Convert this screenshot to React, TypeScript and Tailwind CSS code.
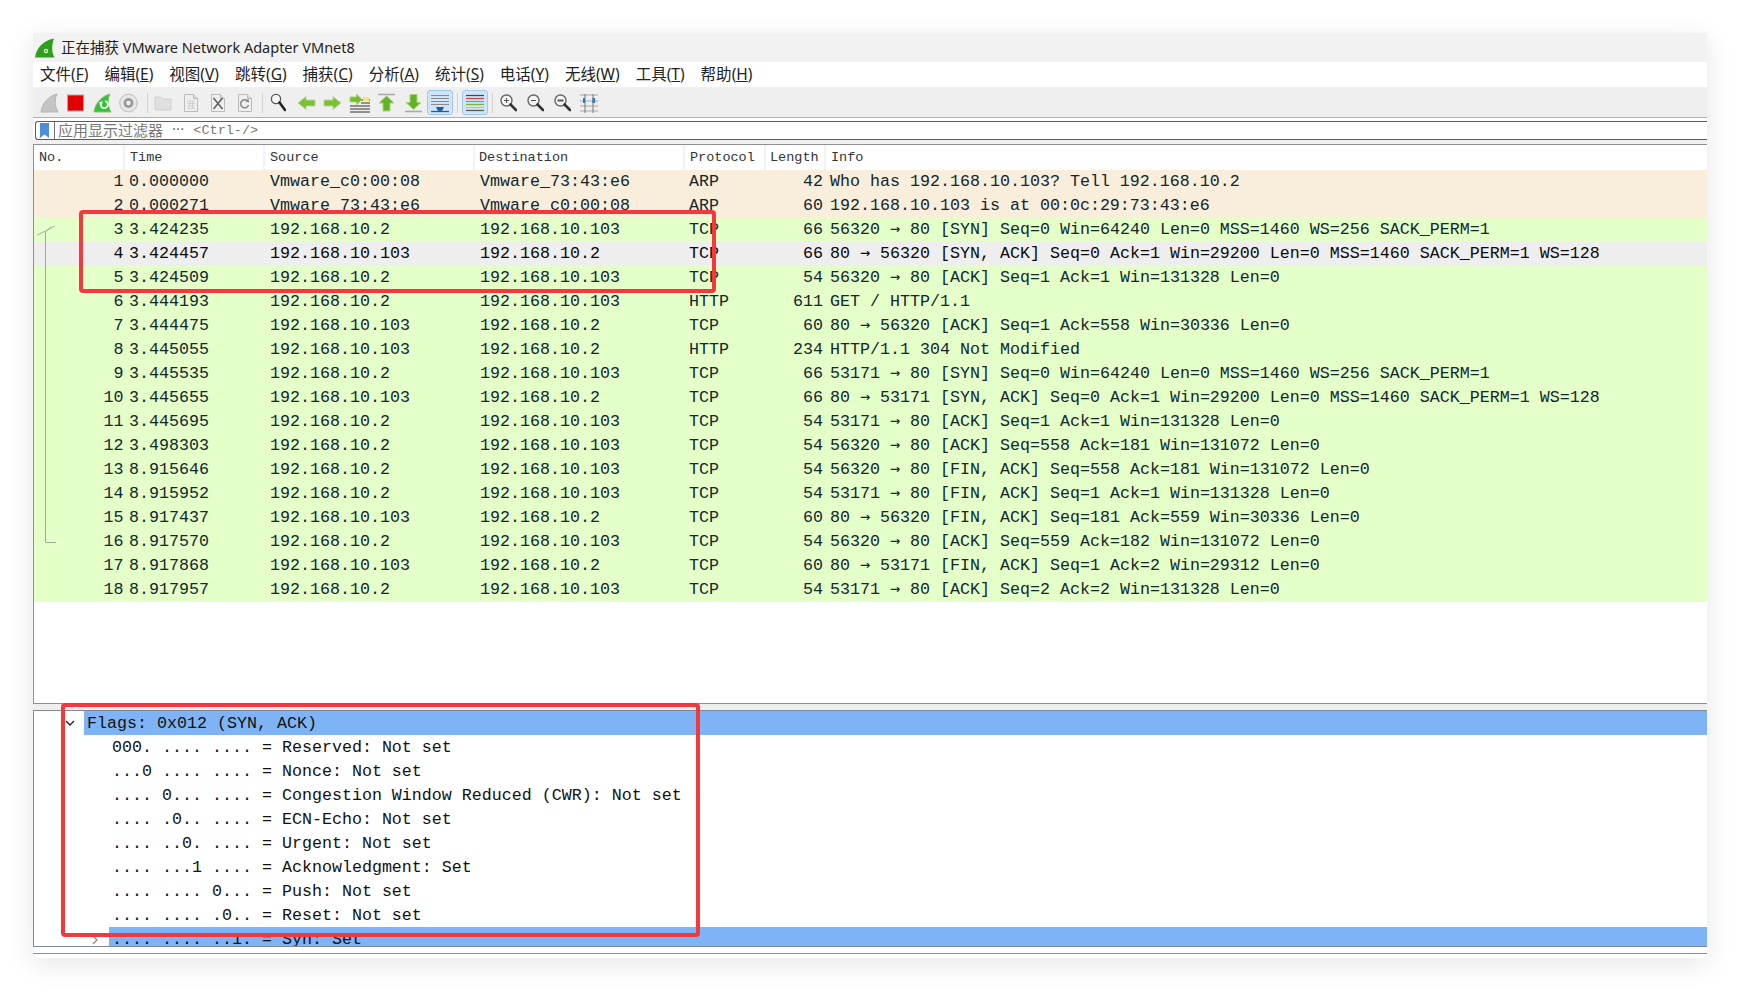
import React from "react";

const rows: [number, string, string, string, string, number, string, string][] = [
  [1, "0.000000", "Vmware_c0:00:08", "Vmware_73:43:e6", "ARP", 42, "Who has 192.168.10.103? Tell 192.168.10.2", "arp"],
  [2, "0.000271", "Vmware_73:43:e6", "Vmware_c0:00:08", "ARP", 60, "192.168.10.103 is at 00:0c:29:73:43:e6", "arp"],
  [3, "3.424235", "192.168.10.2", "192.168.10.103", "TCP", 66, "56320 → 80 [SYN] Seq=0 Win=64240 Len=0 MSS=1460 WS=256 SACK_PERM=1", "tcp"],
  [4, "3.424457", "192.168.10.103", "192.168.10.2", "TCP", 66, "80 → 56320 [SYN, ACK] Seq=0 Ack=1 Win=29200 Len=0 MSS=1460 SACK_PERM=1 WS=128", "sel"],
  [5, "3.424509", "192.168.10.2", "192.168.10.103", "TCP", 54, "56320 → 80 [ACK] Seq=1 Ack=1 Win=131328 Len=0", "tcp"],
  [6, "3.444193", "192.168.10.2", "192.168.10.103", "HTTP", 611, "GET / HTTP/1.1", "tcp"],
  [7, "3.444475", "192.168.10.103", "192.168.10.2", "TCP", 60, "80 → 56320 [ACK] Seq=1 Ack=558 Win=30336 Len=0", "tcp"],
  [8, "3.445055", "192.168.10.103", "192.168.10.2", "HTTP", 234, "HTTP/1.1 304 Not Modified", "tcp"],
  [9, "3.445535", "192.168.10.2", "192.168.10.103", "TCP", 66, "53171 → 80 [SYN] Seq=0 Win=64240 Len=0 MSS=1460 WS=256 SACK_PERM=1", "tcp"],
  [10, "3.445655", "192.168.10.103", "192.168.10.2", "TCP", 66, "80 → 53171 [SYN, ACK] Seq=0 Ack=1 Win=29200 Len=0 MSS=1460 SACK_PERM=1 WS=128", "tcp"],
  [11, "3.445695", "192.168.10.2", "192.168.10.103", "TCP", 54, "53171 → 80 [ACK] Seq=1 Ack=1 Win=131328 Len=0", "tcp"],
  [12, "3.498303", "192.168.10.2", "192.168.10.103", "TCP", 54, "56320 → 80 [ACK] Seq=558 Ack=181 Win=131072 Len=0", "tcp"],
  [13, "8.915646", "192.168.10.2", "192.168.10.103", "TCP", 54, "56320 → 80 [FIN, ACK] Seq=558 Ack=181 Win=131072 Len=0", "tcp"],
  [14, "8.915952", "192.168.10.2", "192.168.10.103", "TCP", 54, "53171 → 80 [FIN, ACK] Seq=1 Ack=1 Win=131328 Len=0", "tcp"],
  [15, "8.917437", "192.168.10.103", "192.168.10.2", "TCP", 60, "80 → 56320 [FIN, ACK] Seq=181 Ack=559 Win=30336 Len=0", "tcp"],
  [16, "8.917570", "192.168.10.2", "192.168.10.103", "TCP", 54, "56320 → 80 [ACK] Seq=559 Ack=182 Win=131072 Len=0", "tcp"],
  [17, "8.917868", "192.168.10.103", "192.168.10.2", "TCP", 60, "80 → 53171 [FIN, ACK] Seq=1 Ack=2 Win=29312 Len=0", "tcp"],
  [18, "8.917957", "192.168.10.2", "192.168.10.103", "TCP", 54, "53171 → 80 [ACK] Seq=2 Ack=2 Win=131328 Len=0", "tcp"],
];

const details = [
  "000. .... .... = Reserved: Not set",
  "...0 .... .... = Nonce: Not set",
  ".... 0... .... = Congestion Window Reduced (CWR): Not set",
  ".... .0.. .... = ECN-Echo: Not set",
  ".... ..0. .... = Urgent: Not set",
  ".... ...1 .... = Acknowledgment: Set",
  ".... .... 0... = Push: Not set",
  ".... .... .0.. = Reset: Not set",
];

const menus = [
  ["文件", "F"], ["编辑", "E"], ["视图", "V"], ["跳转", "G"], ["捕获", "C"], ["分析", "A"],
  ["统计", "S"], ["电话", "Y"], ["无线", "W"], ["工具", "T"], ["帮助", "H"],
];

const Ico = ({ w, ml, children }: { w: number; ml: string; children: React.ReactNode }) => (
  <svg width={w} height={20} viewBox={`0 0 ${w} 20`} className={`shrink-0 ${ml}`}>{children}</svg>
);

const Glass = ({ mark }: { mark?: string }) => (
  <>
    <circle cx="7.5" cy="7.5" r="5.5" fill="#f6f6f6" stroke="#666" strokeWidth="1.4" />
    <path d="M11.5 11.5 L17 17" stroke="#333" strokeWidth="2.6" strokeLinecap="round" />
    {mark === "plus" && <path d="M5 7.5h5M7.5 5v5" stroke="#555" strokeWidth="1.1" />}
    {mark === "minus" && <path d="M5 7.5h5" stroke="#555" strokeWidth="1.1" />}
    {mark === "reset" && <path d="M4.5 7.5h6" stroke="#555" strokeWidth="2" />}
  </>
);

const Doc = ({ children }: { children?: React.ReactNode }) => (
  <>
    <path d="M2.5 1.5h9l4 4v13h-13z" fill="#efefef" stroke="#bbb" />
    <path d="M11.5 1.5v4h4" fill="#ddd" stroke="#bbb" />
    {children}
  </>
);

const Toolbar = () => (
  <div className="flex items-center h-[29px] bg-[#efefef] border-b border-[#b0b0b0] box-content">
    <Ico w={19} ml="ml-[7px]">
      <path d="M1 19 C2 10 9 3 17 1 C14 7 15 14 18 19 Z" fill="#c4c4c4" stroke="#b4b4b4" />
    </Ico>
    <Ico w={17} ml="ml-[8px]">
      <rect x="0.5" y="2" width="16" height="16" fill="#e30000" stroke="#a8a8a8" />
    </Ico>
    <Ico w={19} ml="ml-[9px]">
      <path d="M1 19 C2 10 9 3 17 1 C14 7 15 14 18 19 Z" fill="#33c23a" stroke="#8fbf70" />
      <path d="M12 8 A3.6 3.6 0 1 1 8 10" fill="none" stroke="#fff" strokeWidth="1.7" />
      <path d="M5.5 9.5 L9.5 8 L9 12 Z" fill="#fff" />
    </Ico>
    <Ico w={19} ml="ml-[7px]">
      <circle cx="9.5" cy="10" r="8.8" fill="#e8e8e8" stroke="#bdbdbd" />
      <circle cx="9.5" cy="10" r="5" fill="#9a9a9a" />
      <circle cx="9.5" cy="10" r="2.2" fill="#efefef" />
    </Ico>
    <div className="w-px h-[20px] bg-[#d4d4d4] ml-[9px]" />
    <Ico w={18} ml="ml-[6px]">
      <path d="M1 4h6l2 2h8v11H1z" fill="#dfdfdf" stroke="#d0d0d0" />
    </Ico>
    <Ico w={17} ml="ml-[10px]">
      <Doc><path d="M5 8h8M5 10.5h8M5 13h8M5 15.5h8M7.5 8v8M10.5 8v8" stroke="#ccc" strokeWidth="0.8" /></Doc>
    </Ico>
    <Ico w={18} ml="ml-[10px]">
      <Doc><path d="M4.5 5 L13.5 16 M13.5 5 L4.5 16" stroke="#666" strokeWidth="1.7" /></Doc>
    </Ico>
    <Ico w={17} ml="ml-[9px]">
      <Doc><path d="M11.5 8 A4 4 0 1 0 12.5 12" fill="none" stroke="#888" strokeWidth="1.5" /><path d="M9.5 8.5 L13 9.5 L12.5 5.5 Z" fill="#888" /></Doc>
    </Ico>
    <div className="w-px h-[20px] bg-[#d4d4d4] ml-[9px]" />
    <Ico w={16} ml="ml-[7px]">
      <circle cx="6" cy="6" r="4.6" fill="#fafafa" stroke="#555" strokeWidth="1.3" />
      <path d="M9.5 9.5 L15 17" stroke="#222" strokeWidth="2.6" strokeLinecap="round" />
    </Ico>
    <Ico w={19} ml="ml-[11px]">
      <path d="M1 10 L9 3.500 V7 H18 V13 H9 V16.500 Z" fill="#7cc035" stroke="#b4d98c" />
    </Ico>
    <Ico w={19} ml="ml-[7px]">
      <path d="M18 10 L10 3.500 V7 H1 V13 H10 V16.500 Z" fill="#7cc035" stroke="#b4d98c" />
    </Ico>
    <Ico w={21} ml="ml-[7px]">
      <path d="M4 7h17M12 10h9M1 13h20M1 16h20M1 19h20" stroke="#333" strokeWidth="1.1" />
      <rect x="14" y="4" width="6" height="4" fill="#f3e27a" />
      <path d="M13 6.5 L7.5 1 V4 H1 V9 H7.5 V12 Z" fill="#76bb2c" stroke="#a9d47a" />
    </Ico>
    <Ico w={19} ml="ml-[7px]">
      <path d="M1 1.5h17" stroke="#aaa" strokeWidth="1.6" />
      <path d="M9.5 3 L17 10 H13 V18 H6 V10 H2 Z" fill="#62b325" stroke="#a9d47a" />
    </Ico>
    <Ico w={19} ml="ml-[8px]">
      <path d="M1 18.5h17" stroke="#aaa" strokeWidth="1.6" />
      <path d="M9.5 16.5 L17 9.5 H13 V1.5 H6 V9.5 H2 Z" fill="#62b325" stroke="#a9d47a" />
    </Ico>
    <div className="flex items-center justify-center w-[26px] h-[25px] ml-[4px] bg-[#cfe4f9] border border-[#9fc8ec] rounded-[3px]">
      <svg width="20" height="20" viewBox="0 0 20 20">
        <path d="M1 2.5h18M1 5.5h18M1 8.5h18M1 11.5h18" stroke="#8a8a8a" strokeWidth="1" />
        <path d="M1 18.5h18" stroke="#1f5f99" strokeWidth="1.3" />
        <path d="M6 14h8l-2 4h-4z" fill="#1f5f99" />
      </svg>
    </div>
    <div className="w-px h-[20px] bg-[#d4d4d4] ml-[4px]" />
    <div className="flex items-center justify-center w-[26px] h-[25px] ml-[4px] bg-[#cfe4f9] border border-[#9fc8ec] rounded-[3px]">
      <svg width="20" height="20" viewBox="0 0 20 20">
        <path d="M1 2.5h18" stroke="#444" strokeWidth="1.2" />
        <path d="M1 5.5h18" stroke="#d9433f" strokeWidth="1.2" />
        <path d="M1 8.5h18" stroke="#5aa0d8" strokeWidth="1.2" />
        <path d="M1 11.5h18" stroke="#72b53a" strokeWidth="1.2" />
        <path d="M1 14.5h18" stroke="#e6c72e" strokeWidth="1.2" />
        <path d="M1 17.5h18" stroke="#555" strokeWidth="1.2" />
      </svg>
    </div>
    <div className="w-px h-[20px] bg-[#d4d4d4] ml-[4px]" />
    <Ico w={18} ml="ml-[6px]"><Glass mark="plus" /></Ico>
    <Ico w={18} ml="ml-[9px]"><Glass mark="minus" /></Ico>
    <Ico w={18} ml="ml-[9px]"><Glass mark="reset" /></Ico>
    <Ico w={18} ml="ml-[9px]">
      <path d="M0 2h18M0 8h18M0 13h18M0 18h18" stroke="#a8a8a8" strokeWidth="1" />
      <path d="M5 1v19M13 1v19" stroke="#777" strokeWidth="1" />
      <path d="M3 5h2v5H3zM12.5 5h2.500v5h-2.500z" fill="#2e78c4" />
    </Ico>
  </div>
);

const rowBg: Record<string, string> = {
  arp: "bg-[#f8eedb] text-[#12272e]",
  tcp: "bg-[#e4ffc7] text-[#12272e]",
  sel: "bg-[#eeeeee] text-[#0a0a0a]",
};

const Info = ({ text }: { text: string }) => {
  const parts = text.split("→");
  if (parts.length < 2) return <span>{text}</span>;
  return (
    <span>
      {parts[0]}
      <span className="leading-none" style={{ fontFamily: '"DejaVu Sans Mono", monospace' }}>→</span>
      {parts[1]}
    </span>
  );
};

const cols = "grid grid-cols-[95px_141px_210px_209px_141px_1fr]";
const cjk = '"Noto Sans", "Noto Sans CJK SC", sans-serif';

export default function App() {
  return (
    <div className="relative w-full h-[991px] overflow-hidden bg-white pt-[33px] pl-[33px]">
      <div className="relative w-[1674px] bg-white shadow-[0_6px_26px_rgba(0,0,0,0.10)]">
        {/* Title bar */}
        <div className="flex items-center h-[29px] bg-[#f2f2f2] pl-[2px]">
          <svg width="20" height="20" viewBox="0 0 20 20" className="shrink-0">
            <path d="M0 19.500 C1.500 10 8 2.500 19 0.500 C16.500 7 16.500 14 19.500 19.500 Z" fill="#2f9e1f" />
            <path d="M11 13 m-2.200 0 a2.200 2.200 0 1 0 4.400 0 a2.200 2.200 0 1 0 -4.400 0" fill="#e8f5d8" />
            <circle cx="11" cy="13" r="1" fill="#2f9e1f" />
          </svg>
          <span className="ml-[6px] text-[14.5px] leading-[29px] text-[#222] whitespace-nowrap" style={{ fontFamily: cjk }}>
            正在捕获 VMware Network Adapter VMnet8
          </span>
        </div>
        {/* Menu */}
        <div className="flex items-center h-[26px] pt-px bg-white border-b border-[#f0f0f0] pl-[7px] gap-[16px] text-[15.500px] text-[#222]" style={{ fontFamily: cjk }}>
          {menus.map(([n, k]) => (
            <span key={k} className="whitespace-nowrap">
              {n}(<span className="underline">{k}</span>)
            </span>
          ))}
        </div>
        <Toolbar />
        {/* Filter */}
        <div className="h-[3px] bg-white" />
        <div className="flex items-center h-[19px] ml-[2px] bg-white border-y border-l border-[#5c5c5c] rounded-l-[3px] text-[13.5px] text-[#777]" style={{ fontFamily: '"Liberation Mono", "Noto Sans CJK SC", monospace' }}>
          <svg width="9" height="15" viewBox="0 0 9 15" className="ml-[4px] shrink-0">
            <path d="M0 0h9v15L4.500 11.500 0 15z" fill="#4a8fd8" />
          </svg>
          <div className="w-px h-[17px] bg-[#777] ml-[5px]" />
          <span className="ml-[3px] text-[15px] whitespace-nowrap" style={{ fontFamily: cjk }}>应用显示过滤器</span>
          <span className="ml-[7px] whitespace-nowrap tracking-[-4px]">···</span>
          <span className="ml-[11px] pt-[2px] whitespace-nowrap">&lt;Ctrl-/&gt;</span>
        </div>
        <div className="h-[4px] bg-[#f0f0f0]" />
        {/* Packet list */}
        <div className="relative h-[560px] bg-white border-l border-t border-b border-[#8f8f8f]" style={{ fontFamily: '"Liberation Mono", monospace' }}>
          <div className="relative flex h-[25px] text-[13.5px] leading-[25px] text-[#333]">
            <span className="w-[91px] pl-[5px] border-r-2 border-[#f2f2f2]">No.</span>
            <span className="w-[140px] pl-[5px] border-r-2 border-[#f2f2f2]">Time</span>
            <span className="w-[210px] pl-[5px] border-r-2 border-[#f2f2f2]">Source</span>
            <span className="w-[210px] pl-[4px] border-r-2 border-[#f2f2f2]">Destination</span>
            <span className="w-[81px] pl-[5px] border-r-2 border-[#f2f2f2]">Protocol</span>
            <span className="w-[60px] pl-[4px] border-r-2 border-[#f2f2f2]">Length</span>
            <span className="pl-[5px]">Info</span>
          </div>
          {rows.map(([no, t, s, d, p, l, info, c]) => (
            <div key={no} className={`${cols} h-[24px] text-[16.67px] leading-[24px] whitespace-nowrap ${rowBg[c]}`}>
              <span className="text-right pr-[5.500px]">{no}</span>
              <span>{t}</span>
              <span>{s}</span>
              <span>{d}</span>
              <span className="flex justify-between pr-[7px]"><span>{p}</span><span>{l}</span></span>
              <Info text={info} />
            </div>
          ))}
          <svg width="30" height="330" viewBox="0 0 30 330" className="absolute left-0 top-[74px]">
            <path d="M11.500 13 V323.500 H22" fill="none" stroke="#9fa89f" strokeWidth="1" />
            <path d="M3 16 L11.500 12 L21 7 M11.500 13 L17 7.500" fill="none" stroke="#a5aca5" strokeWidth="1" />
          </svg>
        </div>
        <div className="h-[6px] bg-[#eeeeee]" />
        {/* Details */}
        <div className="h-[237px] overflow-hidden bg-white border-l border-t border-b border-[#7f8a96] text-[16.67px] leading-[24px] text-[#111] whitespace-nowrap" style={{ fontFamily: '"Liberation Mono", monospace' }}>
          <div className="relative h-[24px] pt-px ml-[50px] pl-[3px] bg-[#7eb4f6]">
            <svg width="12" height="12" viewBox="0 0 12 12" className="absolute left-[-20px] top-[6px]">
              <path d="M2 4 L6 8 L10 4" fill="none" stroke="#222" strokeWidth="1.4" />
            </svg>
            Flags: 0x012 (SYN, ACK)
          </div>
          {details.map((d) => (
            <div key={d} className="h-[24px] pt-px pl-[78px]">{d}</div>
          ))}
          <div className="relative h-[24px] pt-px ml-[75px] pl-[3px] bg-[#7eb4f6]">
            <svg width="10" height="12" viewBox="0 0 10 12" className="absolute left-[-19px] top-[7px]">
              <path d="M3 2 L7 6 L3 10" fill="none" stroke="#888" strokeWidth="1.2" />
            </svg>
            .... .... ..1. = Syn: Set
          </div>
        </div>
        <div className="h-[6px] bg-white" />
        <div className="h-[5px] bg-white border-t border-[#8f8f8f]" />
      </div>
      {/* Red annotation boxes */}
      <div className="absolute left-[79px] top-[210px] w-[637px] h-[83px] border-4 border-[#f4393d] rounded-[4px]" />
      <div className="absolute left-[61px] top-[703px] w-[639px] h-[234px] border-4 border-[#f4393d] rounded-[4px]" />
    </div>
  );
}
